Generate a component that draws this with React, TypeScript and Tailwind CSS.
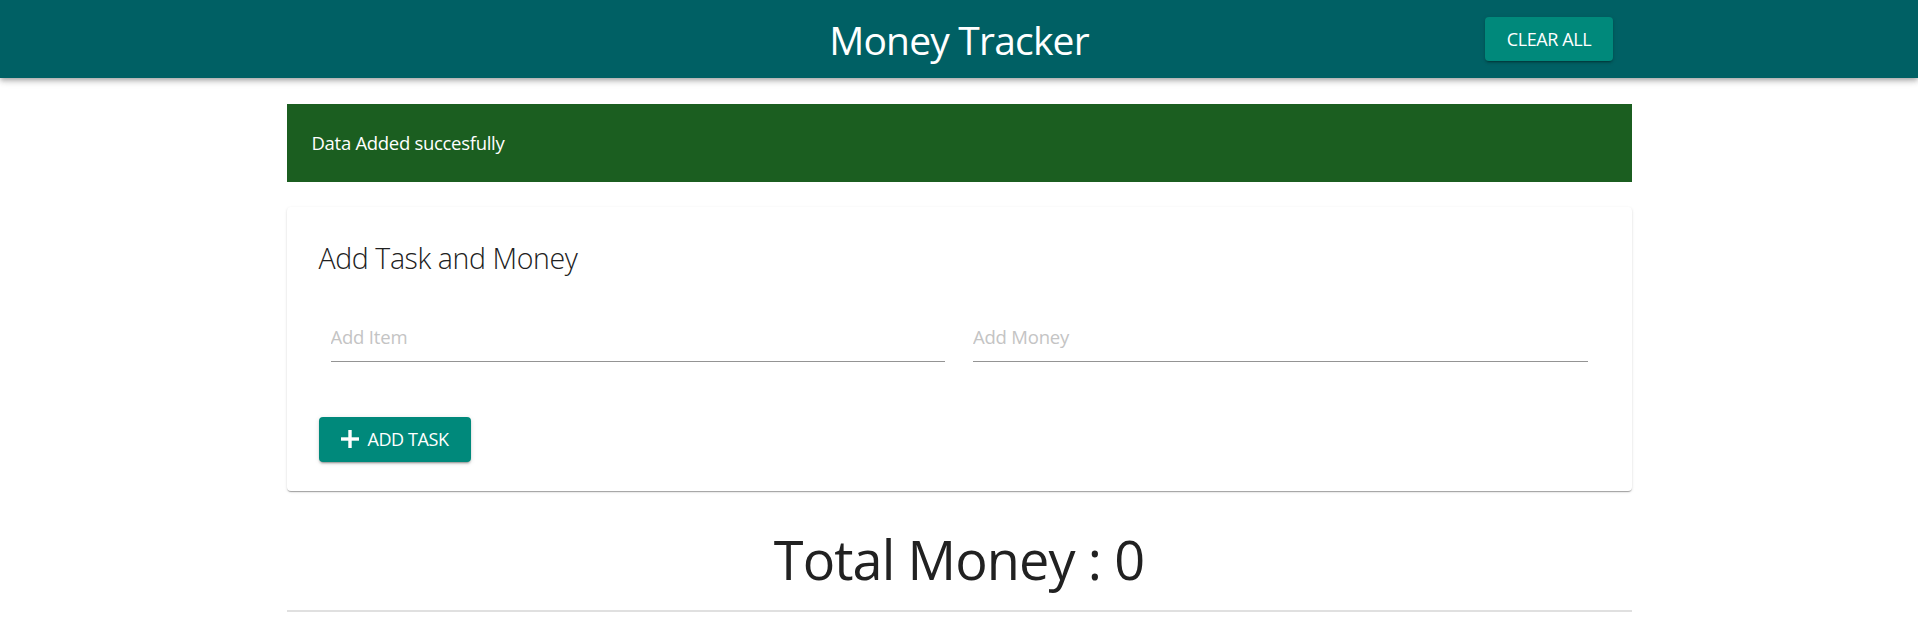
import React from "react";

function PlusIcon() {
  return (
    <svg viewBox="0 0 20 20" width="20" height="20" fill="currentColor" className="-mt-[1px]">
      <rect x="1" y="8.3" width="18" height="3.4" />
      <rect x="8.3" y="1" width="3.4" height="18" />
    </svg>
  );
}

export default function App() {
  return (
    <div className="min-h-[622px] bg-white font-['Open_Sans','Noto_Sans',sans-serif]">
      <header className="relative z-10 grid h-[78px] grid-cols-[1fr_auto_1fr] items-center bg-[#006064] shadow-[0_2px_4px_-1px_rgba(0,0,0,0.2),0_4px_5px_0_rgba(0,0,0,0.14),0_1px_10px_0_rgba(0,0,0,0.12)]">
        <div />
        <h1 className="text-[39px] font-normal leading-none tracking-[-0.8px] text-white">Money Tracker</h1>
        <div className="flex justify-end pr-[305px]">
          <button className="flex h-[44px] w-[128px] items-center justify-center rounded-[4px] bg-[#00897b] text-[18px] tracking-[-0.4px] text-white shadow-[0_3px_1px_-2px_rgba(0,0,0,0.2),0_2px_2px_0_rgba(0,0,0,0.14),0_1px_5px_0_rgba(0,0,0,0.12)]">
            CLEAR ALL
          </button>
        </div>
      </header>

      <main className="mx-auto w-[1345px] pt-[26px]">
        <div className="flex h-[78px] items-center bg-[#1b5e20] pl-[25px] text-[18.5px] tracking-[-0.3px] text-white">
          Data Added succesfully
        </div>

        <section className="mt-[25px] rounded-[4px] bg-white px-[32px] pt-[32px] pb-[29px] shadow-[0_2px_1px_-1px_rgba(0,0,0,0.2),0_1px_1px_0_rgba(0,0,0,0.14),0_1px_3px_0_rgba(0,0,0,0.12)]">
          <h2 className="text-[28.5px] font-light leading-[39px] tracking-[-0.4px] text-[#212121]">Add Task and Money</h2>
          <div className="mt-[47px] grid grid-cols-2 gap-[28px] px-[12px]">
            <input
              placeholder="Add Item"
              className="w-full border-b border-[#949494] bg-transparent pb-[13px] text-[18.5px] leading-[23px] tracking-[-0.2px] text-[#212121] outline-none placeholder:text-[#c4c4c4]"
            />
            <input
              placeholder="Add Money"
              className="w-full border-b border-[#949494] bg-transparent pb-[13px] text-[18.5px] leading-[23px] tracking-[-0.2px] text-[#212121] outline-none placeholder:text-[#c4c4c4]"
            />
          </div>
          <button className="mt-[55px] flex h-[45px] w-[152px] items-center justify-center gap-[7px] rounded-[4px] bg-[#00897b] text-[18px] tracking-[-0.4px] text-white shadow-[0_3px_1px_-2px_rgba(0,0,0,0.2),0_2px_2px_0_rgba(0,0,0,0.14),0_1px_5px_0_rgba(0,0,0,0.12)]">
            <PlusIcon />
            <span>ADD TASK</span>
          </button>
        </section>

        <h3 className="mt-[34px] text-center text-[54px] font-normal leading-[69px] tracking-[-0.9px] text-[#212121]">Total Money : 0</h3>
        <div className="mt-[16px] h-[2px] bg-[#e0e0e0]" />
      </main>
    </div>
  );
}
